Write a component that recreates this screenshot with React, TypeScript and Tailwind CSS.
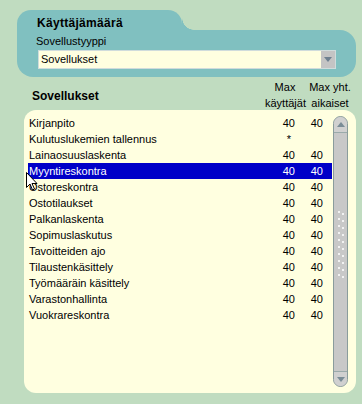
import React from 'react';

const rows = [
    { name: 'Kirjanpito', max: '40', sim: '40' },
    { name: 'Kulutuslukemien tallennus', max: '*', sim: '' },
    { name: 'Lainaosuuslaskenta', max: '40', sim: '40' },
    { name: 'Myyntireskontra', max: '40', sim: '40', selected: true },
    { name: 'Ostoreskontra', max: '40', sim: '40' },
    { name: 'Ostotilaukset', max: '40', sim: '40' },
    { name: 'Palkanlaskenta', max: '40', sim: '40' },
    { name: 'Sopimuslaskutus', max: '40', sim: '40' },
    { name: 'Tavoitteiden ajo', max: '40', sim: '40' },
    { name: 'Tilaustenkäsittely', max: '40', sim: '40' },
    { name: 'Työmääräin käsittely', max: '40', sim: '40' },
    { name: 'Varastonhallinta', max: '40', sim: '40' },
    { name: 'Vuokrareskontra', max: '40', sim: '40' },
];

const Scrollbar: React.FC = () => (
    <div className="w-[15px] h-[271px] mt-[6px] flex flex-col rounded-full border border-[#8a9c9c] bg-[#c8c8c8] overflow-hidden">
        {/* up button */}
        <div className="h-[16px] flex items-center justify-center border-b border-[#9aaaaa] bg-[#d0d0d0]">
            <svg width="8" height="5" viewBox="0 0 8 5"><path d="M0 5 L4 0 L8 5 Z" fill="#7a8c96" /></svg>
        </div>
        <div className="flex-1 flex flex-col justify-center items-center">
            <div className="grid grid-cols-2 gap-x-[2px] gap-y-[3px] mb-[16px]">
                {Array.from({ length: 20 }).map((_, i) => (
                    <span key={i} className={`w-[2px] h-[2px] bg-[#f2f2f2] ${i % 2 === 1 ? 'mt-[2px]' : ''}`} />
                ))}
            </div>
        </div>
        {/* down button */}
        <div className="h-[15px] flex items-center justify-center border-t border-[#9aaaaa] bg-[#d0d0d0]">
            <svg width="8" height="5" viewBox="0 0 8 5"><path d="M0 0 L8 0 L4 5 Z" fill="#7a8c96" /></svg>
        </div>
    </div>
);

const App: React.FC = () => {
    return (
        <div
            className="relative w-[362px] h-[404px] overflow-hidden bg-[#c0dcc0] text-black text-[11px]"
            style={{ fontFamily: '"Liberation Sans", Arial, sans-serif' }}
        >
            {/* Käyttäjämäärä panel */}
            <div className="ml-[17px] pt-[10px] w-[339px]">
                <div className="flex">
                    <div className="w-[165px] h-[20px] bg-[#80c0c0] rounded-t-[14px] pl-[20px] pt-[6px]">
                        <div className="text-[12px] font-bold leading-[14px] tracking-[0.3px]">Käyttäjämäärä</div>
                    </div>
                    <div className="w-[12px] h-[12px] self-end bg-[radial-gradient(circle_at_100%_0,transparent_11.5px,#80c0c0_12px)]" />
                </div>
                <div className="bg-[#80c0c0] rounded-tr-[16px] rounded-b-[16px] pt-[5px] pb-[8px]">
                    <div className="pl-[19px] leading-[13px]">Sovellustyyppi</div>
                    <div className="ml-[21px] mt-[2px] w-[298px] h-[19px] flex border border-[#d0dcdc] bg-[#ffffe0]">
                        <div className="flex-1 pl-[2px] leading-[17px]">Sovellukset</div>
                        <div className="w-[14px] bg-[#c4c4c4] flex items-center justify-center">
                            <svg width="8" height="5" viewBox="0 0 8 5"><path d="M0 0 L8 0 L4 5 Z" fill="#6e8090" /></svg>
                        </div>
                    </div>
                </div>
            </div>

            {/* column headers */}
            <div className="flex h-[31px] mt-[2px] leading-[16px]">
                <div className="w-[265px] pl-[32px] self-center text-[12px] font-bold mt-[2px]">Sovellukset</div>
                <div className="w-[40px] text-center whitespace-nowrap">Max<br />käyttäjät</div>
                <div className="w-[46px] ml-[2px] text-center whitespace-nowrap">Max yht.<br />aikaiset</div>
            </div>

            {/* list panel */}
            <div className="ml-[24px] w-[332px] h-[283px] bg-[#ffffe0] rounded-[12px] flex">
                <div className="w-[304px] ml-[4px] pt-[5px]">
                    {rows.map(r => (
                        <div
                            key={r.name}
                            className={`flex h-[16px] leading-[16px] ${r.selected ? 'bg-[#0000c8] text-white' : ''}`}
                        >
                            <div className="flex-1 pl-[1px] whitespace-nowrap">{r.name}</div>
                            <div className={`w-[28px] text-right ${r.max === '*' ? 'pr-[4px]' : ''}`}>{r.max}</div>
                            <div className="w-[28px] text-right mr-[9px]">{r.sim}</div>
                        </div>
                    ))}
                </div>
                <div className="ml-[1px]">
                    <Scrollbar />
                </div>
            </div>

            {/* mouse cursor */}
            <svg className="absolute left-[26px] top-[172px]" width="12" height="19" viewBox="0 0 12 19">
                <path d="M0.5 0.5 L0.5 15.5 L4 12 L6.5 18 L8.5 17 L6 11.5 L11 11.5 Z" fill="#fff" stroke="#000" strokeWidth="1" />
            </svg>
        </div>
    );
};

export default App;
